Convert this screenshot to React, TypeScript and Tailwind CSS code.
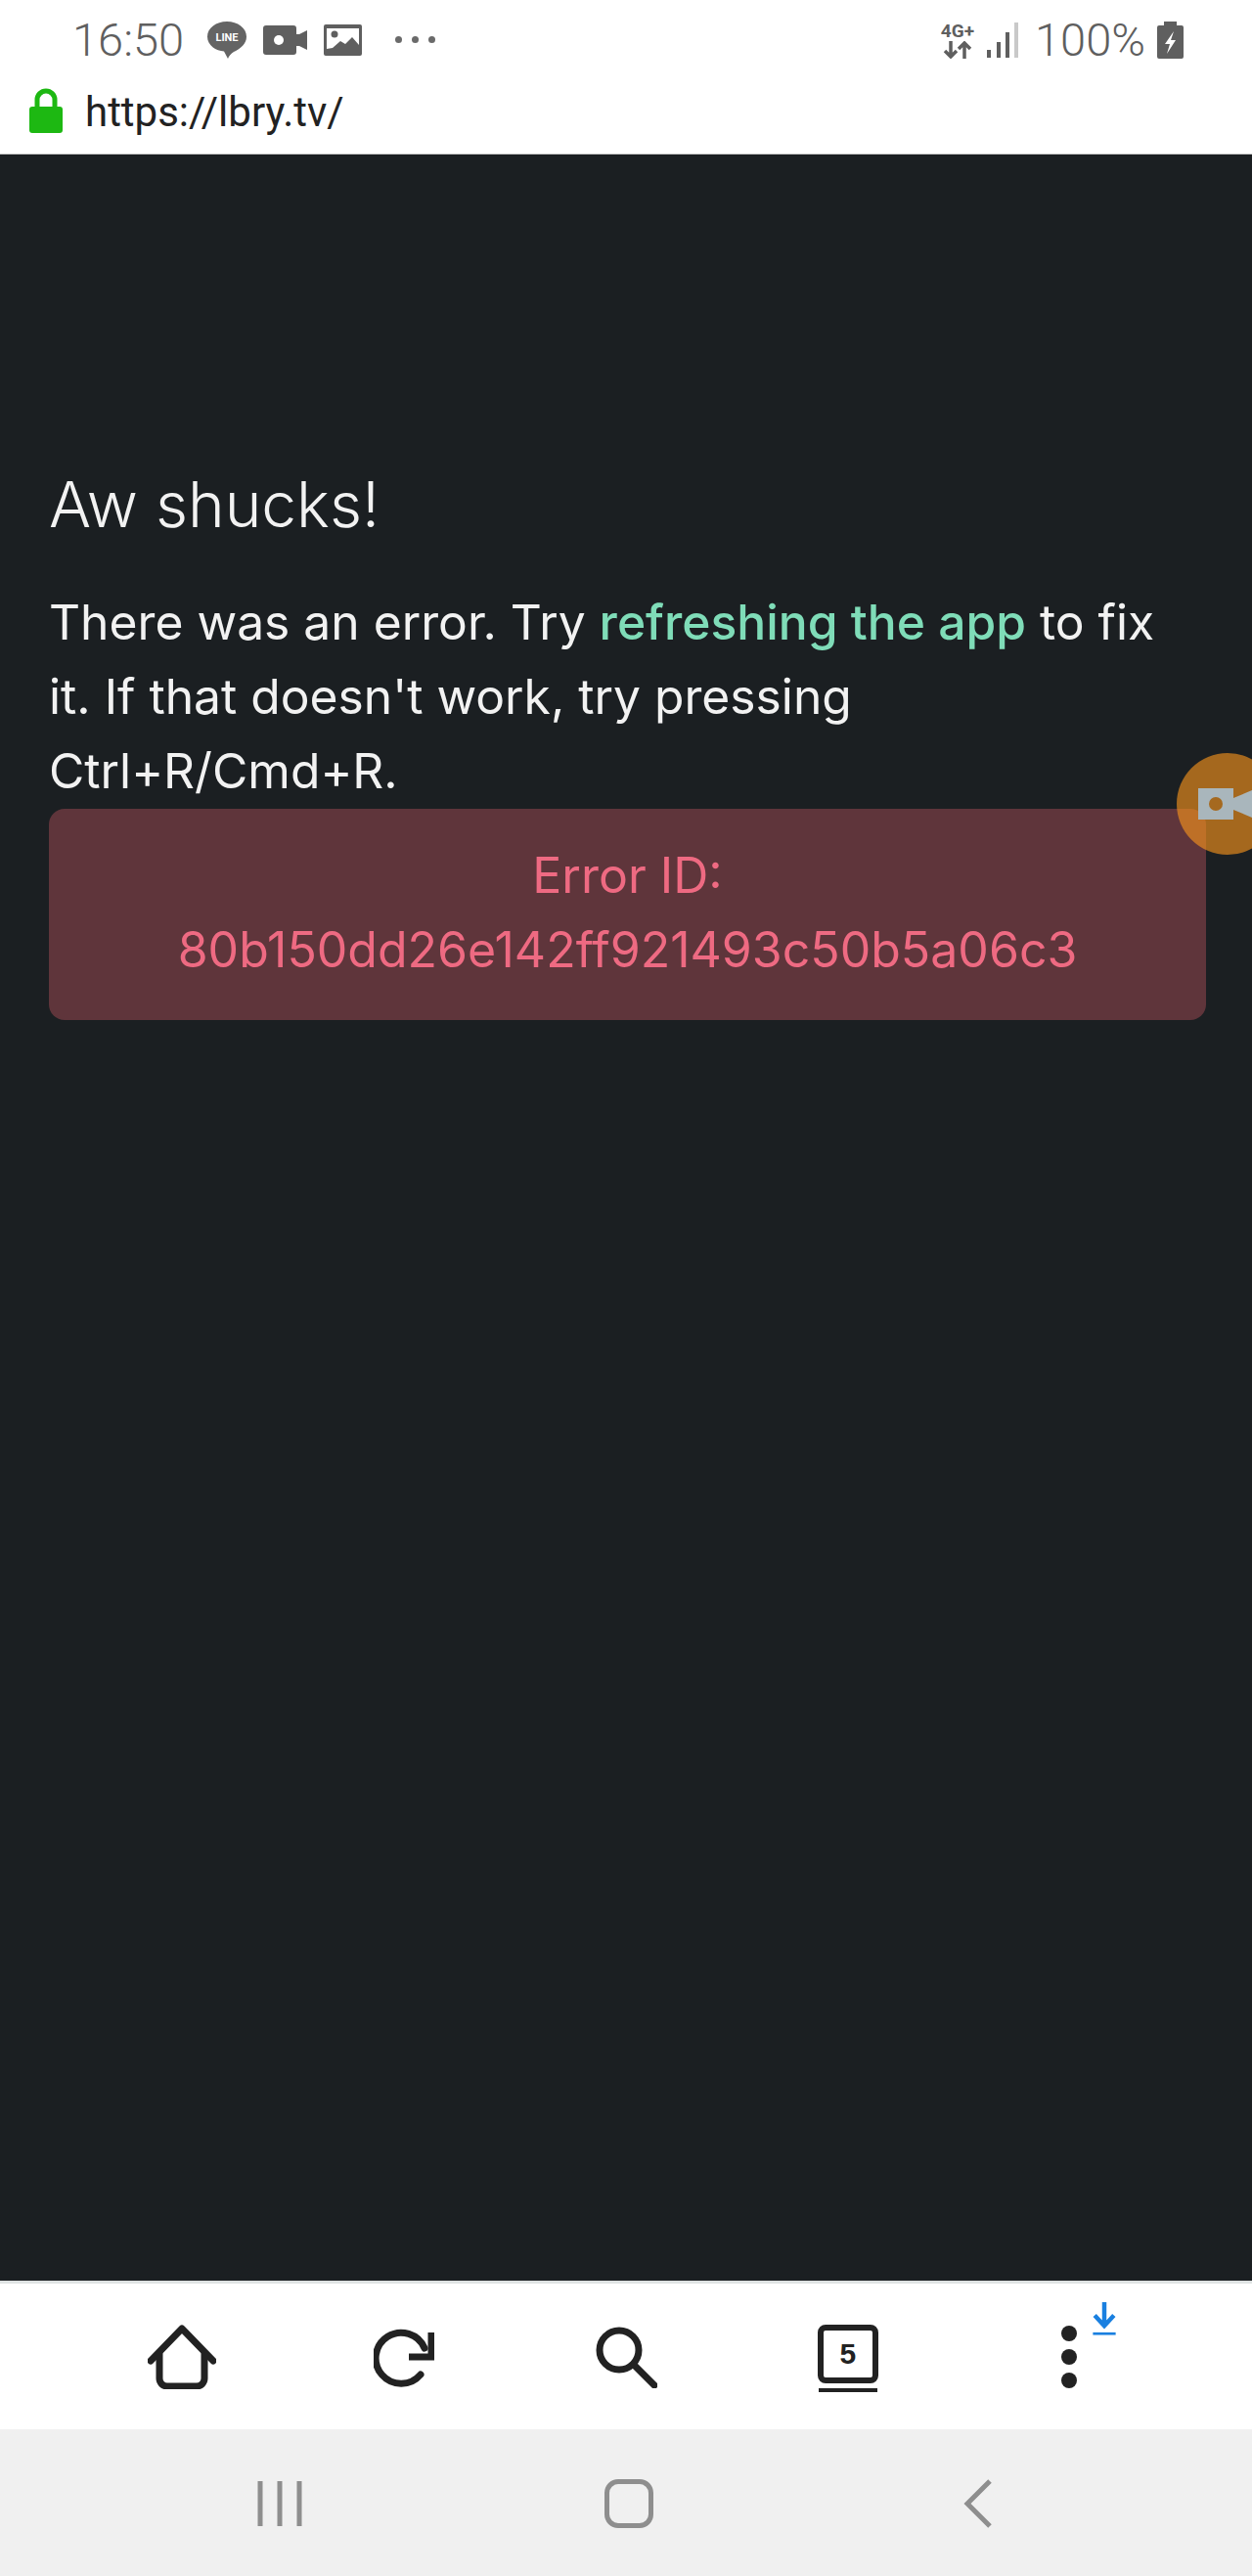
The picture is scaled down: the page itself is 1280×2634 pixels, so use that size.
import React from 'react';

const StatusBar: React.FC = () => (
  <div className="flex items-center justify-between h-[78px] pl-[74px] pr-[70px] pt-[3px] text-[#5f5f5f] font-['Roboto',sans-serif]">
    <div className="flex items-center">
      <span className="text-[47px] font-light leading-none mr-[24px]">16:50</span>
      {/* line bubble */}
      <svg viewBox="0 0 40 38" className="w-[40px] h-[38px] mr-[17px]">
        <path d="M20 0C9 0 0 6.500 0 15.500S9 30 17 30.500L21 38c1-3 3-5 6-7 7-3.500 13-8 13-15.500C40 6.500 31 0 20 0z" fill="#646464" />
        <text x="20" y="20" textAnchor="middle" fontSize="11" fontWeight="700" fill="#fff" fontFamily="Roboto, sans-serif">LINE</text>
      </svg>
      {/* video */}
      <svg viewBox="0 0 45 30" className="w-[45px] h-[30px] mr-[17px]">
        <path d="M3 0h28a3 3 0 0 1 3 3v6l3 0 8-4v20l-8-4-3 0v6a3 3 0 0 1-3 3H3a3 3 0 0 1-3-3V3a3 3 0 0 1 3-3z" fill="#5f5f5f" />
        <circle cx="16" cy="15" r="5" fill="#fff" />
      </svg>
      {/* picture */}
      <svg viewBox="0 0 39 32" className="w-[39px] h-[32px] mr-[34px]">
        <rect x="0" y="0" width="39" height="32" rx="2" fill="#5f5f5f" />
        <path d="M3 25V4h33v17l-7-8-7 7-5-3-8 7z" fill="#fff" />
        <circle cx="11" cy="10" r="3.500" fill="#5f5f5f" />
      </svg>
      <div className="flex gap-[10px]">
        <span className="w-[7px] h-[7px] rounded-full bg-[#6a6a6a]" />
        <span className="w-[7px] h-[7px] rounded-full bg-[#6a6a6a]" />
        <span className="w-[7px] h-[7px] rounded-full bg-[#6a6a6a]" />
      </div>
    </div>
    <div className="flex items-center">
      <div className="flex flex-col items-center mr-[13px]">
        <span className="text-[19px] font-bold leading-[20px]">4G+</span>
        <svg viewBox="0 0 30 18" className="w-[30px] h-[18px]">
          <path d="M8 0v15M2 10l6 6 6-6M22 18V3M16 8l6-6 6 6" fill="none" stroke="#5f5f5f" strokeWidth="3.500" />
        </svg>
      </div>
      {/* signal */}
      <svg viewBox="0 0 32 38" className="w-[32px] h-[38px] mr-[17px]">
        <rect x="0" y="29" width="4" height="8" fill="#5f5f5f" />
        <rect x="10" y="21" width="4" height="16" fill="#5f5f5f" />
        <rect x="19" y="11" width="4" height="26" fill="#5f5f5f" />
        <rect x="28" y="1" width="4" height="36" fill="#c9c9c9" />
      </svg>
      <span className="text-[47px] font-light leading-none mr-[12px]">100%</span>
      <svg viewBox="0 0 27 38" className="w-[27px] h-[38px]">
        <path d="M7 0h13v4h5a2 2 0 0 1 2 2v30a2 2 0 0 1-2 2H2a2 2 0 0 1-2-2V6a2 2 0 0 1 2-2h5z" fill="#5f5f5f" />
        <path d="M17 10L8 23h5l-3 10 9-14h-5z" fill="#fff" />
      </svg>
    </div>
  </div>
);

const AddressBar: React.FC = () => (
  <div className="flex items-start h-[80px] pl-[30px] border-b border-[#c8c8c8]">
    <svg viewBox="0 0 34 46" className="w-[34px] h-[46px] mt-[12px] mr-[23px]">
      <path d="M8 20v-8a9 9 0 0 1 18 0v8" fill="none" stroke="#1db812" strokeWidth="5" />
      <rect x="0" y="19" width="34" height="27" rx="3" fill="#1db812" />
    </svg>
    <span className="text-[42px] leading-[74px] text-[#222] font-['Roboto',sans-serif]">https://lbry.tv/</span>
  </div>
);

const ErrorPage: React.FC = () => (
  <main className="relative flex-1 bg-[#1b1f22] pl-[50px] pr-[47px] pt-[322px] font-['Inter',sans-serif] text-[#f2f2f2]">
    <h1 className="text-[64px] font-light leading-[72px] mb-[46px]">Aw shucks!</h1>
    <p className="text-[49.750px] leading-[76px]">
      There was an error. Try <span className="text-[#7fdcb8] font-medium">refreshing the app</span> to fix it. If that doesn't work, try pressing Ctrl+R/Cmd+R.
    </p>
    <div className="mt-px rounded-2xl bg-[#5f353b] pt-[30px] pb-[34px] text-center text-[50px] leading-[76px] text-[#ee6a82]">
      <div>Error ID:</div>
      <div>80b150dd26e142ff921493c50b5a06c3</div>
    </div>
    {/* floating recorder button */}
    <div className="absolute top-[612px] left-[1203px] w-[104px] h-[104px] rounded-full bg-[#f6941d]/[0.63] flex items-center pl-[22px]">
      <svg viewBox="0 0 60 32" className="w-[60px] h-[32px] shrink-0">
        <path d="M0 0h36v10l24-10v32l-24-10v10H0z" fill="#a9b6bc" />
        <circle cx="18" cy="16" r="7" fill="#a5691f" />
      </svg>
    </div>
  </main>
);

const Toolbar: React.FC = () => (
  <div className="grid grid-cols-5 items-center h-[152px] px-[73px] bg-white border-t-[3px] border-[#dfe3e3]">
    <div className="flex justify-center">
      <svg viewBox="0 0 70 66" className="w-[70px] h-[66px]" fill="none" stroke="#222" strokeWidth="7" strokeLinecap="round" strokeLinejoin="round">
        <path d="M3 37L35 4l32 33" />
        <path d="M12 30v25a8 8 0 0 0 8 8h30a8 8 0 0 0 8-8V30" />
      </svg>
    </div>
    <div className="flex justify-center pt-[4px]">
      <svg viewBox="0 0 62 62" className="w-[62px] h-[62px]" fill="none" stroke="#222" strokeWidth="7" strokeLinecap="round">
        <path d="M48 47A26 26 0 1 1 52 20" />
        <path d="M59 4v25H36" strokeLinecap="butt" />
      </svg>
    </div>
    <div className="flex justify-center">
      <svg viewBox="0 0 64 64" className="w-[64px] h-[64px]" fill="none" stroke="#222" strokeWidth="7" strokeLinecap="round">
        <circle cx="25" cy="25" r="20" />
        <path d="M40 40l21 21" />
      </svg>
    </div>
    <div className="flex flex-col items-center pt-[3px]">
      <div className="flex items-center justify-center w-[62px] h-[60px] rounded-lg border-[6px] border-[#222] text-[30px] font-bold leading-none text-[#222] font-['Liberation_Sans',sans-serif]">5</div>
      <div className="w-[60px] h-[4px] mt-[5px] bg-[#222]" />
    </div>
    <div className="relative flex justify-center pr-[2px]">
      <div className="flex flex-col gap-[8px]">
        <span className="w-[16px] h-[16px] rounded-full bg-[#222]" />
        <span className="w-[16px] h-[16px] rounded-full bg-[#222]" />
        <span className="w-[16px] h-[16px] rounded-full bg-[#222]" />
      </div>
      <svg viewBox="0 0 28 38" className="absolute left-[135px] top-[-24px] w-[28px] h-[34px]" fill="none" stroke="#1a80e0" strokeWidth="5">
        <path d="M14 0v27M3 15l11 12 11-12" />
        <path d="M1 36h26" strokeWidth="3" />
      </svg>
    </div>
  </div>
);

const NavBar: React.FC = () => (
  <div className="flex justify-center items-center h-[150px] pl-[6px] pt-[2px] bg-[#f0f0f0]">
    <div className="w-[357px] flex justify-center">
      <svg viewBox="0 0 46 50" className="w-[46px] h-[50px]" fill="none" stroke="#8e8e8e" strokeWidth="5">
        <path d="M3 2v46M23 2v46M43 2v46" />
      </svg>
    </div>
    <div className="w-[357px] flex justify-center">
      <div className="w-[50px] h-[50px] rounded-[14px] border-[5px] border-[#8e8e8e]" />
    </div>
    <div className="w-[357px] flex justify-center">
      <svg viewBox="0 0 30 50" className="w-[30px] h-[50px]" fill="none" stroke="#8e8e8e" strokeWidth="5">
        <path d="M27 2L4 25l23 23" />
      </svg>
    </div>
  </div>
);

const App: React.FC = () => {
  return (
    <div className="flex flex-col h-[2634px] w-[1280px] overflow-hidden bg-white">
      <StatusBar />
      <AddressBar />
      <ErrorPage />
      <Toolbar />
      <NavBar />
    </div>
  );
};

export default App;
